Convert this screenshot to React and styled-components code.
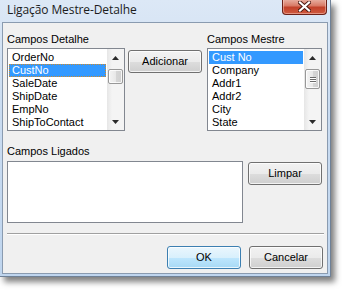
import React from 'react'
import styled, { createGlobalStyle } from 'styled-components'

const GlobalStyle = createGlobalStyle`
  html, body {
    margin: 0;
    padding: 0;
    background: #ffffff;
  }
  body {
    font-family: "Liberation Sans", Arial, sans-serif;
    font-size: 11px;
    color: #000;
  }
`

const Page = styled('div')`
  width: 342px;
  height: 290px;
  overflow: hidden;
`

const Window = styled('div')`
  width: 331px;
  height: 277px;
  display: flex;
  flex-direction: column;
  background: linear-gradient(180deg, #dce8f6 0%, #cadcf1 40%, #bfd5ee 100%);
  box-shadow: 4px 5px 6px rgba(0, 0, 0, 0.5);
  border-right: 1px solid #6f8197;
  border-bottom: 1px solid #6f8197;
  box-sizing: border-box;
`

const TitleBar = styled('div')`
  height: 22px;
  flex: none;
  display: flex;
  align-items: flex-start;
  justify-content: space-between;
  padding: 0 3px 0 7px;
`

const TitleText = styled('div')`
  font-family: "Open Sans", "Noto Sans", sans-serif;
  font-size: 12px;
  line-height: 20px;
  color: #1c1c1c;
  letter-spacing: -0.1px;
`

const CloseButton = styled('div')`
  width: 45px;
  height: 16px;
  margin-top: -1px;
  box-sizing: border-box;
  border: 1px solid #6b2118;
  border-top: none;
  border-radius: 0 0 4px 4px;
  background: linear-gradient(180deg, #e9b3a6 0%, #d87a66 45%, #c2412a 55%, #cf5a3f 100%);
  box-shadow: inset 0 0 0 1px rgba(255, 220, 210, 0.45);
  display: flex;
  align-items: center;
  justify-content: center;
`

const Client = styled('div')`
  flex: 1;
  margin: 0 2px 2px 2px;
  border: 1px solid #8a9bb0;
  background: #f0f0f0;
  display: flex;
  flex-direction: column;
  padding: 10px 4px 0 4px;
`

const TopRow = styled('div')`
  display: flex;
  align-items: flex-start;
`

const Group = styled('div')`
  display: flex;
  flex-direction: column;
  width: ${props => props.width}px;
  margin-left: ${props => props.gap || 0}px;
`

const Label = styled('div')`
  line-height: 13px;
  height: 13px;
  margin-top: ${props => props.above || 0}px;
  margin-bottom: ${props => props.below || 2}px;
  white-space: nowrap;
`

const ListBox = styled('div')`
  height: 83px;
  box-sizing: border-box;
  border: 1px solid #828790;
  background: #fff;
  display: flex;
  overflow: hidden;
`

const Items = styled('div')`
  flex: 1;
  padding-top: 2px;
  overflow: hidden;
`

const Item = styled('div')`
  height: 13px;
  line-height: 11px;
  margin: 0 1px;
  padding-left: 2px;
  box-sizing: border-box;
  white-space: nowrap;
  background: ${props => (props.selected ? '#3399ff' : 'transparent')};
  color: ${props => (props.selected ? '#fff' : '#000')};
  border: 1px dotted ${props => (props.focused ? '#d08a2a' : 'transparent')};
`

const ScrollBar = styled('div')`
  width: 17px;
  flex: none;
  display: flex;
  flex-direction: column;
  background: linear-gradient(90deg, #e6e6e6 0%, #f4f4f4 30%, #f4f4f4 100%);
`

const Arrow = styled('div')`
  height: 17px;
  flex: none;
  display: flex;
  align-items: center;
  justify-content: center;
`

const Track = styled('div')`
  flex: 1;
  display: flex;
  flex-direction: column;
  align-items: center;
`

const Thumb = styled('div')`
  width: 15px;
  height: ${props => props.size}px;
  margin-top: ${props => props.offset}px;
  box-sizing: border-box;
  border: 1px solid #989898;
  border-radius: 2px;
  background: linear-gradient(90deg, #f4f4f4 0%, #e8e8e8 50%, #d6d6d6 51%, #d0d0d0 100%);
  box-shadow: inset 0 0 0 1px rgba(255, 255, 255, 0.8);
  display: flex;
  flex-direction: column;
  align-items: center;
  justify-content: center;
  gap: 1px;
`

const Grip = styled('div')`
  width: 6px;
  height: 1px;
  background: #6b6b6b;
  box-shadow: 0 1px 0 #fff;
`

const Button = styled('div')`
  width: 74px;
  height: 23px;
  flex: none;
  box-sizing: border-box;
  margin-top: ${props => props.top || 0}px;
  margin-left: ${props => props.gap || 0}px;
  border: 1px solid ${props => (props.primary ? '#3c7fb1' : '#707070')};
  border-radius: 3px;
  background: ${props => (props.primary
    ? 'linear-gradient(180deg, #eaf6fd 0%, #d9f0fc 50%, #bee6fd 51%, #a7d9f5 100%)'
    : 'linear-gradient(180deg, #f2f2f2 0%, #ebebeb 50%, #dddddd 51%, #cfcfcf 100%)')};
  box-shadow: inset 0 0 0 1px rgba(255, 255, 255, 0.75);
  display: flex;
  align-items: center;
  justify-content: center;
  line-height: 13px;
`

const LinkedRow = styled('div')`
  display: flex;
  align-items: flex-start;
`

const LinkedBox = styled('div')`
  width: 236px;
  height: 62px;
  box-sizing: border-box;
  border: 1px solid #828790;
  background: #fff;
`

const Separator = styled('div')`
  height: 1px;
  margin: 10px -1px 0 0;
  background: #a0a0a0;
  box-shadow: 0 1px 0 #ffffff;
`

const Footer = styled('div')`
  display: flex;
  justify-content: flex-end;
  gap: 8px;
  margin-top: 12px;
`

const ArrowIcon = ({ down }) => (
  <svg width='7' height='4' viewBox='0 0 7 4'>
    <path d={down ? 'M0 0 H7 L3.5 4 Z' : 'M0 4 H7 L3.5 0 Z'} fill='#2b2b2b' />
  </svg>
)

const CloseIcon = () => (
  <svg width='13' height='11' viewBox='0 0 13 11'>
    <path d='M2 1.5 L11 9.5 M11 1.5 L2 9.5' stroke='#4a1810' strokeWidth='4' strokeLinecap='square' />
    <path d='M2 1.5 L11 9.5 M11 1.5 L2 9.5' stroke='#ffffff' strokeWidth='2.2' strokeLinecap='square' />
  </svg>
)

const List = ({ items, selected, focused, thumb, grip }) => (
  <ListBox>
    <Items>
      {items.map((item, i) => (
        <Item key={item} selected={i === selected} focused={focused && i === selected}>{item}</Item>
      ))}
    </Items>
    <ScrollBar>
      <Arrow><ArrowIcon /></Arrow>
      <Track>
        <Thumb size={thumb} offset={3}>
          {grip && <><Grip /><Grip /><Grip /></>}
        </Thumb>
      </Track>
      <Arrow><ArrowIcon down /></Arrow>
    </ScrollBar>
  </ListBox>
)

const detailFields = ['OrderNo', 'CustNo', 'SaleDate', 'ShipDate', 'EmpNo', 'ShipToContact']
const masterFields = ['Cust No', 'Company', 'Addr1', 'Addr2', 'City', 'State']

const App = () => (
  <Page>
    <GlobalStyle />
    <Window>
      <TitleBar>
        <TitleText>Ligação Mestre-Detalhe</TitleText>
        <CloseButton><CloseIcon /></CloseButton>
      </TitleBar>
      <Client>
        <TopRow>
          <Group width={118}>
            <Label>Campos Detalhe</Label>
            <List items={detailFields} selected={1} focused thumb={15} />
          </Group>
          <Button top={17} gap={3}>Adicionar</Button>
          <Group width={115} gap={5}>
            <Label>Campos Mestre</Label>
            <List items={masterFields} selected={0} thumb={20} grip />
          </Group>
        </TopRow>
        <Label above={14} below={3}>Campos Ligados</Label>
        <LinkedRow>
          <LinkedBox />
          <Button top={1} gap={5}>Limpar</Button>
        </LinkedRow>
        <Separator />
        <Footer>
          <Button primary>OK</Button>
          <Button>Cancelar</Button>
        </Footer>
      </Client>
    </Window>
  </Page>
)

export default App
